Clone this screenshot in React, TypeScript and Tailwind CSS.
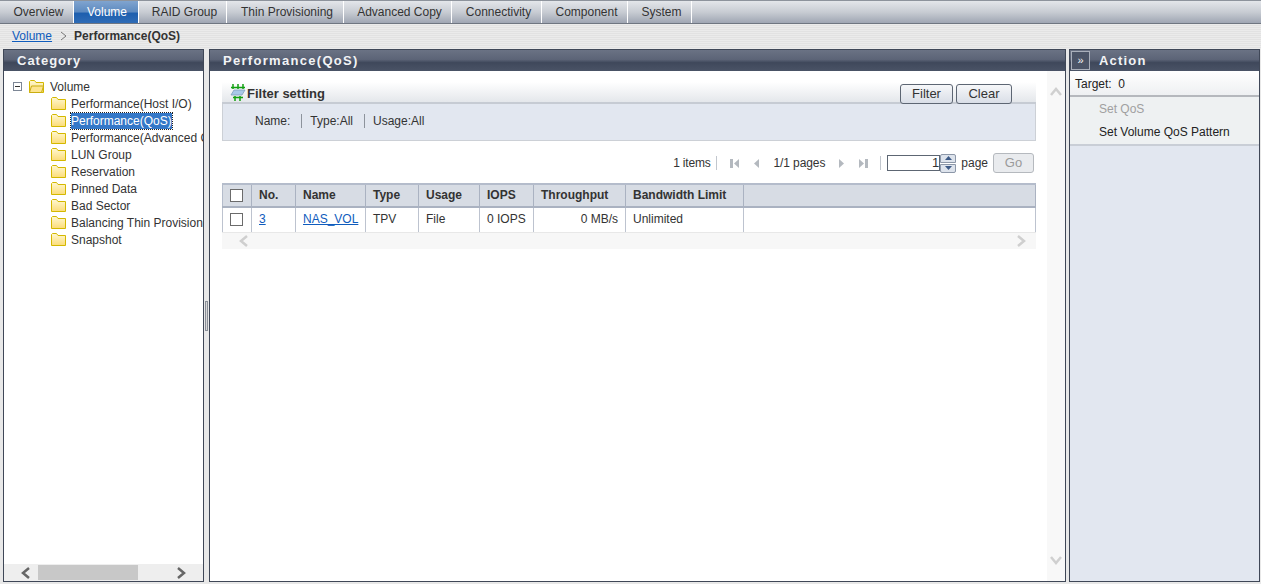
import { ReactNode } from 'react';

const tabs = [
  { label: 'Overview', width: 'w-[74px]', pad: 'pl-[4px]' },
  { label: 'Volume', width: 'w-[65px]', active: true },
  { label: 'RAID Group', width: 'w-[88px]', pad: 'pl-[4px]' },
  { label: 'Thin Provisioning', width: 'w-[117px]', pad: 'pl-[4px]' },
  { label: 'Advanced Copy', width: 'w-[108px]', pad: 'pl-[4px]' },
  { label: 'Connectivity', width: 'w-[90px]', pad: 'pl-[4px]' },
  { label: 'Component', width: 'w-[86px]', pad: 'pl-[4px]' },
  { label: 'System', width: 'w-[64px]', pad: 'pl-[4px]' },
];

const treeItems = [
  'Performance(Host I/O)',
  'Performance(QoS)',
  'Performance(Advanced Copy)',
  'LUN Group',
  'Reservation',
  'Pinned Data',
  'Bad Sector',
  'Balancing Thin Provisioning',
  'Snapshot',
];

const columns = [
  { label: 'No.', value: '3', link: true },
  { label: 'Name', value: 'NAS_VOL', link: true },
  { label: 'Type', value: 'TPV' },
  { label: 'Usage', value: 'File' },
  { label: 'IOPS', value: '0 IOPS' },
  { label: 'Throughput', value: '0 MB/s', right: true },
  { label: 'Bandwidth Limit', value: 'Unlimited' },
  { label: '', value: '' },
];

const tableGrid = 'grid grid-cols-[30px_44px_70px_53px_61px_54px_92px_118px_1fr]';

function Folder({ open }: { open?: boolean }) {
  return (
    <svg width="15" height="13" viewBox="0 0 15 13" className="shrink-0">
      <defs>
        <linearGradient id="fold" x1="0" y1="0" x2="0" y2="1">
          <stop offset="0" stopColor="#fff8d2" />
          <stop offset="1" stopColor="#fbdc78" />
        </linearGradient>
      </defs>
      <path d="M.5 12.500V1.500l1-1h4l1.500 2h7.500v10z" fill="url(#fold)" stroke="#d4b800" />
      {open && <path d="M.5 12.500l2-6.500h12l-2 6.500z" fill="#fde48f" stroke="#c9ad10" />}
    </svg>
  );
}

function Chevron({ dir, className }: { dir: 'l' | 'r' | 'u' | 'd'; className: string }) {
  const paths = { l: 'M9 1L3 6l6 5', r: 'M3 1l6 5-6 5', u: 'M1 9l5-6 5 6', d: 'M1 3l5 6 5-6' };
  return (
    <svg width="12" height="12" viewBox="0 0 12 12" className={className}>
      <path d={paths[dir]} fill="none" stroke="currentColor" strokeWidth="2.500" />
    </svg>
  );
}

function PanelTitle({ children, spacing }: { children: ReactNode; spacing: string }) {
  return (
    <div className={`flex h-[21px] shrink-0 items-center bg-[linear-gradient(#6a7284,#5c6477_45%,#3f485b_60%,#4a5366)] pl-[13px] text-[13px] font-bold text-[#f2f3f5] ${spacing}`}>
      {children}
    </div>
  );
}

function PagerIcon({ path, width }: { path: string; width: number }) {
  return (
    <svg width={width} height="11" viewBox={`0 0 ${width} 11`} className="shrink-0 text-[#b4b9bf]">
      <path d={path} fill="currentColor" />
    </svg>
  );
}

function Checkbox() {
  return <span className="block h-[13px] w-[13px] border border-[#6b6b6b] bg-white" />;
}

export default function App() {
  return (
    <div className="flex h-[584px] w-[1261px] flex-col overflow-hidden bg-[#e8e8e8] font-['Liberation_Sans',Arial,sans-serif] text-xs text-[#333]">
      {/* top tabs */}
      <div className="flex h-[24px] shrink-0 border-y border-t-[#8d939c] border-b-[#6f7681] bg-[linear-gradient(#e3e6ea,#c8ccd3_50%,#9fa6b3)]">
        {tabs.map((tab) =>
          tab.active ? (
            <div
              key={tab.label}
              className={`${tab.width} flex items-center justify-center border-r border-white bg-[linear-gradient(#80a4cf,#5d8ac0_50%,#1d5eae_55%,#2f6cb6)] pl-[2px] text-white`}
            >
              {tab.label}
            </div>
          ) : (
            <div key={tab.label} className={`${tab.width} ${tab.pad} flex items-center justify-center border-r border-white`}>
              {tab.label}
            </div>
          ),
        )}
      </div>

      {/* breadcrumb */}
      <div className="flex h-[25px] shrink-0 items-center bg-[repeating-linear-gradient(#ebebeb_0px,#ebebeb_1px,#e2e2e2_1px,#e2e2e2_2px)] pb-[2px] pl-3">
        <a className="text-[#0f5cbd] underline">Volume</a>
        <svg width="8" height="10" viewBox="0 0 8 10" className="ml-[8px] mr-[6px] text-[#777]">
          <path d="M1 1l5 4-5 4" fill="none" stroke="currentColor" />
        </svg>
        <span className="font-bold text-[#333]">Performance(QoS)</span>
      </div>

      {/* panels */}
      <div className="flex min-h-0 flex-1 pb-[2px] pl-[3px] pr-[1px]">
        {/* category */}
        <div className="flex w-[201px] shrink-0 flex-col border border-[#3f4757] bg-white">
          <PanelTitle spacing="tracking-[1px]">Category</PanelTitle>
          <div className="min-h-0 flex-1 overflow-hidden pt-[7px]">
            <div className="flex h-[17px] items-center whitespace-nowrap pl-[9px]">
              <span className="mr-[7px] flex h-[9px] w-[9px] shrink-0 items-center justify-center border border-[#7d8796] text-[#333]">
                <span className="h-px w-[5px] bg-[#333]" />
              </span>
              <span className="mr-[6px] flex">
                <Folder open />
              </span>
              Volume
            </div>
            {treeItems.map((item) => (
              <div key={item} className="flex h-[17px] items-center whitespace-nowrap pl-[47px]">
                <span className="mr-[5px] flex">
                  <Folder />
                </span>
                {item === 'Performance(QoS)' ? (
                  <span className="bg-[#3478c8] text-white outline-1 outline-dotted outline-[#222]">{item}</span>
                ) : (
                  item
                )}
              </div>
            ))}
          </div>
          <div className="flex h-[17px] shrink-0 items-center bg-[#eeeeee] pl-[16px] text-[#666]">
            <Chevron dir="l" className="shrink-0" />
            <div className="ml-[6px] h-[15px] w-[100px] bg-[#c8c8c8]" />
            <Chevron dir="r" className="ml-[37px] shrink-0" />
          </div>
        </div>

        {/* divider */}
        <div className="flex w-[5px] shrink-0 items-center justify-center">
          <span className="h-[30px] w-[3px] border border-[#8a8f98] bg-[#d8d8d8]" />
        </div>

        {/* main */}
        <div className="flex w-[857px] shrink-0 flex-col border border-[#3f4757] bg-white">
          <PanelTitle spacing="tracking-[1.300px]">Performance(QoS)</PanelTitle>
          <div className="flex min-h-0 flex-1">
            <div className="min-w-0 flex-1 pl-[12px] pr-[11px] pt-[11px]">
              {/* filter */}
              <div className="flex h-[22px] items-center justify-between border-b-2 border-[#c6cbd3] bg-[linear-gradient(#ffffff,#e4e7eb)] pr-[24px] pt-[4px]">
                <div className="flex items-center pl-[8px] text-[13px] font-bold text-[#333]">
                  <svg width="16" height="17" viewBox="0 0 16 17" className="mb-[4px] mr-px shrink-0">
                    <path d="M3 0v5M8 0v5M13 0v5M5 12v5M10 12v5M1 3.500h14M3 13.500h10" stroke="#12a012" strokeWidth="1.500" fill="none" />
                    <path d="M4 6h11l-3 5H1z" fill="#a8c8e8" stroke="#7d9cbd" strokeWidth=".8" />
                  </svg>
                  Filter setting
                </div>
                <div className="flex gap-[3px]">
                  <button className="h-[20px] w-[53px] rounded-[3px] border border-[#5d6673] bg-[linear-gradient(#f6f7f9,#d9dee7)] text-[13px] text-[#333]">
                    Filter
                  </button>
                  <button className="h-[20px] w-[56px] rounded-[3px] border border-[#5d6673] bg-[linear-gradient(#f6f7f9,#d9dee7)] text-[13px] text-[#333]">
                    Clear
                  </button>
                </div>
              </div>
              <div className="flex h-[37px] items-start border border-t-0 border-[#ccd0d6] bg-[#e2e7f0] pl-[32px] pt-[9px]">
                <span>Name:</span>
                <span className="ml-[11px] mr-[8px] mt-px h-[14px] w-px bg-[#8d939c]" />
                <span>Type:All</span>
                <span className="ml-[11px] mr-[8px] mt-px h-[14px] w-px bg-[#8d939c]" />
                <span>Usage:All</span>
              </div>

              {/* pager */}
              <div className="mt-[12px] flex h-[20px] items-center justify-end pr-[2px]">
                <span className="tracking-[-0.2px]">1 items</span>
                <span className="ml-[6px] h-[14px] w-px bg-[#c2c7ce]" />
                <span className="ml-[13px] flex">
                  <PagerIcon width={9} path="M0 1h3v9H0zM9 1v9L4 5.500z" />
                </span>
                <span className="ml-[14px] flex">
                  <PagerIcon width={7} path="M6 1v9L1 5.500z" />
                </span>
                <span className="ml-[13px] tracking-[-0.1px]">1/1 pages</span>
                <span className="ml-[13px] flex">
                  <PagerIcon width={7} path="M1 1v9l5-4.500z" />
                </span>
                <span className="ml-[14px] flex">
                  <PagerIcon width={9} path="M0 1v9l5-4.500zM6 1h3v9H6z" />
                </span>
                <span className="ml-[12px] h-[14px] w-px bg-[#c2c7ce]" />
                <span className="ml-[6px] flex h-[16px] w-[53px] items-center justify-end border border-[#5d6673] bg-white text-[13px]">
                  1
                </span>
                <span className="flex h-[19px] w-[16px] flex-col">
                  <span className="flex h-[9px] items-center justify-center rounded-t-[2px] border border-[#8c97a8] bg-[#dde3ec]">
                    <svg width="7" height="4" viewBox="0 0 7 4"><path d="M0 4l3.500-4L7 4z" fill="#3d5a86" /></svg>
                  </span>
                  <span className="mt-px flex h-[9px] items-center justify-center rounded-b-[2px] border border-[#8c97a8] bg-[#dde3ec]">
                    <svg width="7" height="4" viewBox="0 0 7 4"><path d="M0 0l3.500 4L7 0z" fill="#3d5a86" /></svg>
                  </span>
                </span>
                <span className="ml-[5px]">page</span>
                <button className="ml-[5px] h-[20px] w-[41px] rounded-[3px] border border-[#b5b9be] bg-[#e9ebee] text-[13px] text-[#9a9a9a]">
                  Go
                </button>
              </div>

              {/* table */}
              <div className="mt-[10px]">
                <div className={`${tableGrid} h-[25px] border-y-2 border-t-[#b4bccb] border-b-[#aab2c1] bg-[#d7dce4]`}>
                  <div className="flex items-center justify-center border-x border-l-[#b4bccb] border-r-[#aab2c1] pr-[2px]">
                    <Checkbox />
                  </div>
                  {columns.map((col) => (
                    <div key={col.label} className="flex items-center border-r border-[#aab2c1] pb-[2px] pl-[7px] font-bold text-[#333]">
                      {col.label}
                    </div>
                  ))}
                </div>
                <div className={`${tableGrid} h-[25px] border-b border-[#e8e8e8]`}>
                  <div className="flex items-center justify-center border-x border-[#bdc3cf] pb-px pr-[2px]">
                    <Checkbox />
                  </div>
                  {columns.map((col) => (
                    <div
                      key={col.label}
                      className={
                        col.right
                          ? 'flex items-center justify-end border-r border-[#bdc3cf] pb-[2px] pr-[7px]'
                          : 'flex items-center border-r border-[#bdc3cf] pb-[2px] pl-[7px]'
                      }
                    >
                      {col.link ? <a className="text-[#0f5cbd] underline">{col.value}</a> : col.value}
                    </div>
                  ))}
                </div>
                <div className="flex h-[16px] items-center justify-between bg-[#f7f7f7] pl-[16px] pr-[9px] text-[#cfcfcf]">
                  <Chevron dir="l" className="shrink-0" />
                  <Chevron dir="r" className="shrink-0" />
                </div>
              </div>
            </div>

            {/* vertical scrollbar */}
            <div className="flex w-[18px] shrink-0 flex-col items-center justify-between bg-[#f8f8f8] pb-[15px] pt-[15px] text-[#d0d0d0]">
              <Chevron dir="u" className="shrink-0" />
              <Chevron dir="d" className="shrink-0" />
            </div>
          </div>
        </div>

        {/* action */}
        <div className="ml-[3px] flex w-[191px] shrink-0 flex-col border border-[#3f4757] bg-[#e2e7f0]">
          <div className="flex h-[21px] shrink-0 items-center bg-[linear-gradient(#6a7284,#5c6477_45%,#3f485b_60%,#4a5366)] text-[13px] font-bold tracking-[1.200px] text-[#f2f3f5]">
            <span className="ml-[1px] mr-[9px] flex h-[19px] w-[19px] items-center justify-center border border-[#a9afbb] bg-[#4b5467] text-[11px] font-normal tracking-normal">
              »
            </span>
            Action
          </div>
          <div className="flex h-[26px] shrink-0 items-center border-b-2 border-[#b5b8bd] bg-[linear-gradient(#ffffff,#eef0f2)] pl-[5px] pt-px text-[#222]">
            Target:&nbsp; 0
          </div>
          <div className="flex h-[49px] shrink-0 flex-col border-b-2 border-[#c9ced6] bg-[#eef1f2] pl-[29px]">
            <div className="flex h-[23px] shrink-0 items-center text-[#a0a0a0]">Set QoS</div>
            <div className="flex h-[23px] shrink-0 items-center text-[#222]">Set Volume QoS Pattern</div>
          </div>
        </div>
      </div>
    </div>
  );
}
